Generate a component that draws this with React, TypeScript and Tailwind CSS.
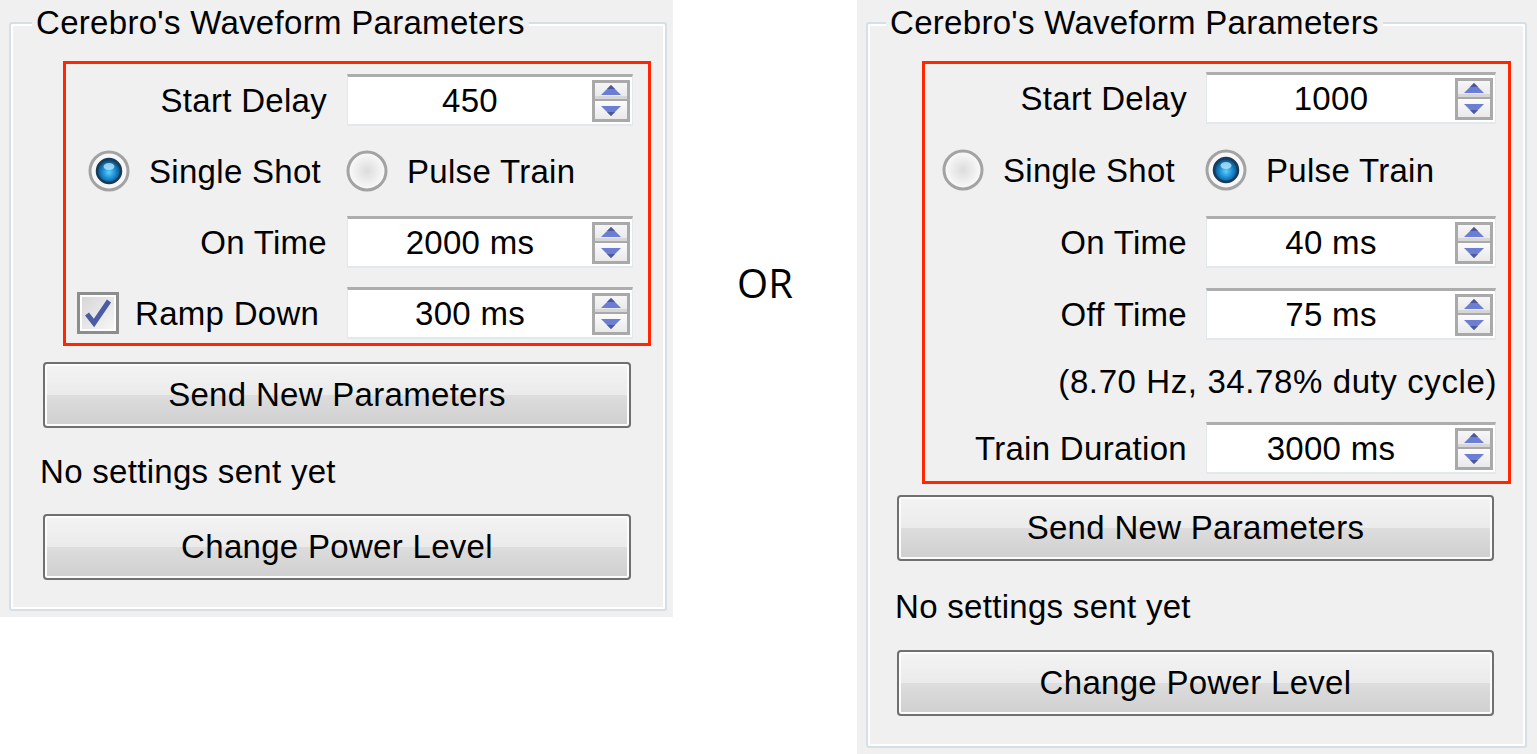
import { useId, type ReactNode } from 'react';

// Windows-classic style waveform parameter panels, shown side by side with "OR"

function SpinBox({ value }: { value: string }) {
  return (
    <div className="flex h-[52px] items-center border-x border-t-[3px] border-b-2 border-x-[#e3e8ed] border-t-[#adadad] border-b-[#e3e8ed] bg-white pr-[2px]">
      <span className="flex-1 text-center leading-none">{value}</span>
      <svg width="38" height="42" viewBox="0 0 38 42" className="shrink-0">
        <defs>
          <linearGradient id="spinUp" x1="0" y1="0" x2="0" y2="1">
            <stop offset="0" stopColor="#f6f6f6" />
            <stop offset="1" stopColor="#e7e7e7" />
          </linearGradient>
          <linearGradient id="spinDown" x1="0" y1="0" x2="0" y2="1">
            <stop offset="0" stopColor="#fbfbfb" />
            <stop offset="1" stopColor="#e9e9e9" />
          </linearGradient>
        </defs>
        <rect x="0" y="0" width="38" height="42" fill="#a9a9a9" />
        <rect x="3" y="3" width="32" height="16" fill="url(#spinUp)" />
        <rect x="3" y="16" width="32" height="3" fill="#d6d6d6" />
        <rect x="3" y="21" width="32" height="18" fill="url(#spinDown)" />
        <polygon points="19,5 29,15 9,15" fill="#6c7dd4" />
        <polygon points="19,5 23,9 15,9" fill="#4c5898" />
        <polygon points="9,26 29,26 19,36" fill="#6c7dd4" />
        <polygon points="15,32 23,32 19,36" fill="#4c5898" />
      </svg>
    </div>
  );
}

function Radio({ checked }: { checked?: boolean }) {
  const id = useId();
  return (
    <svg width="42" height="42" viewBox="0 0 42 42" className="shrink-0">
      <defs>
        <radialGradient id={`${id}-face`} cx="0.5" cy="0.5" r="0.5">
          <stop offset="0" stopColor="#dcdcdc" />
          <stop offset="1" stopColor="#fbfbfb" />
        </radialGradient>
        <radialGradient id={`${id}-dot`} cx="0.5" cy="0.55" r="0.5">
          <stop offset="0" stopColor="#5fd0ff" />
          <stop offset="0.55" stopColor="#1a8bd0" />
          <stop offset="1" stopColor="#0b4a78" />
        </radialGradient>
      </defs>
      <circle cx="21" cy="21" r="19" fill={checked ? '#f7f7f7' : `url(#${id}-face)`} stroke="#a3a3a3" strokeWidth="3" />
      {checked && (
        <>
          <circle cx="21" cy="21" r="12" fill={`url(#${id}-dot)`} stroke="#183b5a" strokeWidth="2.5" />
          <ellipse cx="21" cy="16.5" rx="5.5" ry="3.5" fill="#bfeaff" opacity="0.75" />
        </>
      )}
    </svg>
  );
}

function CheckBox() {
  return (
    <svg width="42" height="42" viewBox="0 0 42 42" className="shrink-0">
      <defs>
        <linearGradient id="checkFace" x1="0" y1="0" x2="1" y2="1">
          <stop offset="0" stopColor="#d6d6d6" />
          <stop offset="1" stopColor="#f6f6f6" />
        </linearGradient>
      </defs>
      <rect x="1.5" y="1.5" width="39" height="39" fill="#fcfcfc" stroke="#8d8d8d" strokeWidth="3" />
      <rect x="5" y="5" width="32" height="32" fill="url(#checkFace)" />
      <path d="M10 22 L17 31 L32 9" fill="none" stroke="#4b5ca4" strokeWidth="5" strokeLinejoin="miter" />
    </svg>
  );
}

function WinButton({ children, className = '' }: { children: ReactNode; className?: string }) {
  return (
    <button
      type="button"
      className={`flex h-[66px] shrink-0 items-center justify-center rounded-[4px] border-2 border-[#707070] bg-[linear-gradient(#f3f3f3,#ebebeb_50%,#dddddd_50%,#cfcfcf)] pb-[2px] leading-none text-black shadow-[inset_0_0_0_2px_#fcfcfc] ${className}`}
    >
      {children}
    </button>
  );
}

function GroupBox({ children, legendClass }: { children: ReactNode; legendClass: string }) {
  return (
    <fieldset className="rounded-[3px] border-2 border-[#d5dfe5] shadow-[inset_0_0_0_2px_#ffffff]">
      <legend className={`bg-[#f0f0f0] px-[4px] leading-[38px] ${legendClass}`}>Cerebro&apos;s Waveform Parameters</legend>
      {children}
    </fieldset>
  );
}

function Label({ children }: { children: ReactNode }) {
  return <span className="text-right leading-none">{children}</span>;
}

function RadioOption({ checked, label, className = '' }: { checked?: boolean; label: string; className?: string }) {
  return (
    <div className={`flex items-center gap-[19px] ${className}`}>
      <Radio checked={checked} />
      <span className="leading-none">{label}</span>
    </div>
  );
}

function SingleShotPanel() {
  return (
    <div className="h-[617px] w-[673px] shrink-0 bg-[#f0f0f0] pl-[9px] pr-[6px] pt-[4px]">
      <GroupBox legendClass="ml-[21px]">
        <div className="flex flex-col pb-[29px] pt-[19px]">
          <div className="ml-[52px] mr-[14px] border-[3px] border-[#ff2600] pb-[4px] pr-[15px] pt-[10px]">
            <div className="grid auto-rows-[52px] grid-cols-[261px_286px] items-center gap-x-[20px] gap-y-[19px]">
              <Label>Start Delay</Label>
              <SpinBox value="450" />
              <RadioOption checked label="Single Shot" className="pl-[22px]" />
              <RadioOption label="Pulse Train" className="-ml-[1px]" />
              <Label>On Time</Label>
              <SpinBox value="2000 ms" />
              <div className="flex items-center gap-[16px] pl-[11px]">
                <CheckBox />
                <span className="leading-none">Ramp Down</span>
              </div>
              <SpinBox value="300 ms" />
            </div>
          </div>
          <WinButton className="ml-[32px] mr-[34px] mt-[16px]">Send New Parameters</WinButton>
          <p className="mb-[22px] ml-[29px] mt-[24px] leading-[40px]">No settings sent yet</p>
          <WinButton className="ml-[32px] mr-[34px]">Change Power Level</WinButton>
        </div>
      </GroupBox>
    </div>
  );
}

function PulseTrainPanel() {
  return (
    <div className="h-[754px] w-[680px] shrink-0 bg-[#f0f0f0] pl-[9px] pr-[10px] pt-[4px]">
      <GroupBox legendClass="ml-[18px]">
        <div className="flex flex-col pb-[30px] pt-[19px]">
          <div className="ml-[54px] mr-[14px] border-[3px] border-[#ff2600] pb-[7px] pr-[12px] pt-[8px]">
            <div className="grid grid-cols-[262px_290px] items-center gap-x-[19px] gap-y-[20px]">
              <Label>Start Delay</Label>
              <SpinBox value="1000" />
              <RadioOption label="Single Shot" className="h-[52px] pl-[17px]" />
              <RadioOption checked label="Pulse Train" className="h-[52px] -ml-[1px]" />
              <Label>On Time</Label>
              <SpinBox value="40 ms" />
              <Label>Off Time</Label>
              <SpinBox value="75 ms" />
              <p className="col-span-2 -mr-[1px] flex h-[42px] items-center justify-end leading-none tracking-[0.6px]">
                (8.70 Hz, 34.78% duty cycle)
              </p>
              <Label>Train Duration</Label>
              <SpinBox value="3000 ms" />
            </div>
          </div>
          <WinButton className="ml-[29px] mr-[31px] mt-[11px]">Send New Parameters</WinButton>
          <p className="mb-[23px] ml-[27px] mt-[26px] leading-[40px]">No settings sent yet</p>
          <WinButton className="ml-[29px] mr-[31px]">Change Power Level</WinButton>
        </div>
      </GroupBox>
    </div>
  );
}

export default function App() {
  return (
    <div className="flex h-[754px] w-[1537px] items-start overflow-hidden bg-white text-[33px] tracking-[0.3px] text-black [font-family:'Liberation_Sans',Arial,sans-serif]">
      <SingleShotPanel />
      <div className="flex flex-1 justify-center pt-[263px] text-[40px] leading-[40px] tracking-normal [font-family:'Open_Sans',sans-serif]">
        OR
      </div>
      <PulseTrainPanel />
    </div>
  );
}
